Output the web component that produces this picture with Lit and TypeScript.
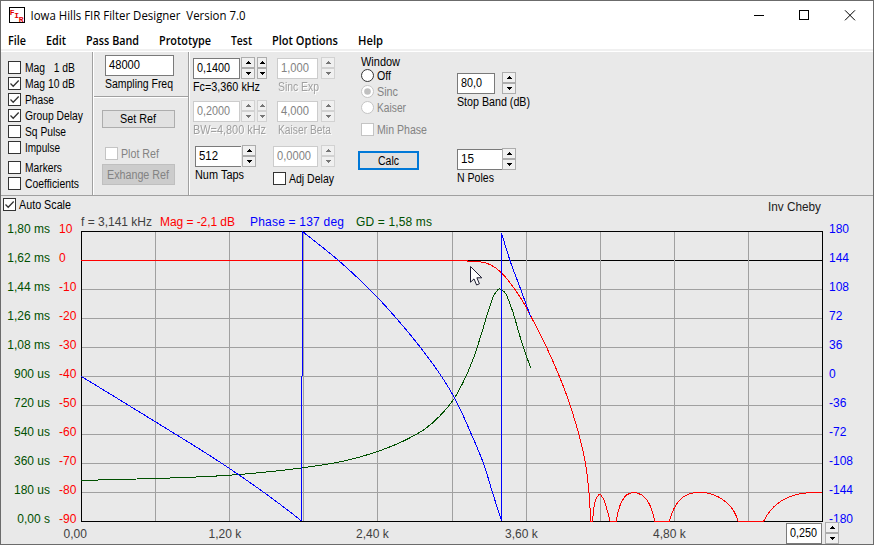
import { LitElement, html, svg, css } from "lit";
import { customElement, property } from "lit/decorators.js";

type Pt = [number, number];

// Text set to a known advance width, baseline 11px below the top edge.
const label = (text: string, width: number, cls = "") => html`
  <svg class="label ${cls}" width=${width + 1} height="14">
    <text x="0" y="11" textLength=${width} lengthAdjust="spacingAndGlyphs">${text.replace(/ /g, "\u00a0")}</text>
  </svg>`;

const labelCss = css`
  .label { display: block; flex: none; overflow: visible; font: 12.5px "Liberation Sans", Arial, sans-serif; fill: #000; }
  .dim { fill: #838383; }
  .etched { fill: #a0a0a0; filter: drop-shadow(1px 1px 0 #fff); }
`;

@customElement("check-box")
class CheckBox extends LitElement {
  @property() text = "";
  @property({ type: Number }) w = 0;
  @property({ type: Boolean }) checked = false;
  @property({ type: Boolean }) off = false;
  @property({ type: Boolean }) round = false;
  static styles = [labelCss, css`
    :host { display: flex; height: 16px; gap: 4px; }
    :host([tight]) { gap: 3px; }
    .box { display: block; flex: none; }
  `];
  render() {
    const line = this.off ? "#c4c4c4" : "#333";
    const shape = this.round
      ? svg`<circle cx="6.5" cy="6.5" r="6" fill="#fff" stroke=${line}/>${this.checked ? svg`<circle cx="6.5" cy="6.5" r="3.3" fill="#c0c0c0"/>` : ""}`
      : svg`<rect x=".5" y=".5" width="12" height="12" fill="#fff" stroke=${line}/>${this.checked ? svg`<path d="M2.5 6.5L5.2 9.2L10.7 3.5" fill="none" stroke="#333" stroke-width="1.3"/>` : ""}`;
    return html`<svg class="box" width="13" height="13">${shape}</svg>${label(this.text, this.w, this.off ? "dim" : "")}`;
  }
}

@customElement("spin-buttons")
class SpinButtons extends LitElement {
  @property({ type: Number }) w = 14;
  @property({ type: Boolean }) off = false;
  static styles = css`:host { display: block; flex: none; height: 22px; } svg { display: block; }`;
  render() {
    const w = this.w;
    const line = this.off ? "#d2d2d2" : "#adadad";
    const ink = this.off ? "#777" : "#000";
    const c = w / 2;
    return html`<svg width=${w} height="22" shape-rendering="crispEdges">
      <rect x=".5" y=".5" width=${w - 1} height="10" fill="#f0f0f0" stroke=${line}/>
      <rect x=".5" y="11.5" width=${w - 1} height="10" fill="#f0f0f0" stroke=${line}/>
      <path d="M${c - 2.5} 7h5v-1h-1v-1h-1v-1h-1v1h-1v1h-1z" fill=${ink}/>
      <path d="M${c - 2.5} 15h5v1h-1v1h-1v1h-1v-1h-1v-1h-1z" fill=${ink}/>
    </svg>`;
  }
}

@customElement("edit-field")
class EditField extends LitElement {
  @property() text = "";
  @property({ type: Number }) w = 0;
  @property({ type: Boolean }) off = false;
  static styles = [labelCss, css`
    :host { display: block; flex: none; box-sizing: border-box; height: 21px; background: #fff; border: 1px solid #7a7a7a; padding: 2px 0 0 3px; }
    :host([off]) { border-color: #ccc; }
    :host([open]) { border-right: 0; }
  `];
  render() { return label(this.text, this.w, this.off ? "dim" : ""); }
}

// Chord-length parametrised spline through the sample points.
function curve(p: Pt[]): string {
  const dist = (a: Pt, b: Pt) => Math.hypot(b[0] - a[0], b[1] - a[1]);
  const last = p.length - 1;
  const slope = p.map((b, i): Pt => {
    if (i === 0 || i === last) {
      const [a, c] = i === 0 ? [p[0], p[1]] : [p[last - 1], p[last]];
      const d = dist(a, c);
      return [(c[0] - a[0]) / d, (c[1] - a[1]) / d];
    }
    const a = p[i - 1], c = p[i + 1], d1 = dist(a, b), d2 = dist(b, c);
    const mix = (k: 0 | 1) => (((b[k] - a[k]) / d1) * d2 + ((c[k] - b[k]) / d2) * d1) / (d1 + d2);
    return [mix(0), mix(1)];
  });
  let d = `M${p[0][0]} ${p[0][1]}`;
  for (let i = 0; i < last; i++) {
    const b = p[i], c = p[i + 1], t = dist(b, c) / 3;
    d += `C${b[0] + slope[i][0] * t} ${b[1] + slope[i][1] * t} ${c[0] - slope[i + 1][0] * t} ${c[1] - slope[i + 1][1] * t} ${c[0]} ${c[1]}`;
  }
  return d;
}

const PHASE: Pt[][] = [
  [[81.5, 376.5], [155.3, 421.7], [229.5, 468.5], [289.5, 511.5], [301.5, 521]],
  [[302.5, 231.5], [338.5, 260.5], [377.5, 297.5], [396.5, 318.5], [420.5, 347.5], [437.5, 370.5], [453.5, 396], [471.5, 434.5], [483.5, 463.5], [492.5, 492.5], [501.2, 520]],
  [[501.5, 233], [510, 260.5], [520, 287.5], [530.7, 317]],
];
const DELAY: Pt[] = [
  [81.5, 480.4], [155.3, 478.5], [229.5, 475.2], [290, 469.4], [302, 467.9], [351, 459.4], [377.5, 451.5], [403.5, 441], [424.5, 429.3], [440, 415.8], [453.5, 399.5], [463, 382.5], [473.5, 358], [481.7, 333], [490, 306], [495, 293.5], [499.5, 288.8], [504.3, 292], [510, 304], [520, 336.5], [526, 355], [530.7, 367.5],
];
const MAG: Pt[][] = [
  [[467, 261.5], [478, 261.6], [486.7, 263.3], [493.5, 266.5], [501.5, 272.8], [511.7, 285], [523.5, 302.5], [530.7, 316], [545, 344], [556.7, 370], [568.5, 400.5], [575.3, 421.8], [580, 438.5], [585.5, 463.5], [588.5, 487], [590.8, 521]],
  [[592.7, 521], [594, 506.7], [596.5, 497.7], [599.7, 494.3], [602.7, 497.7], [606.7, 508.5], [610, 521]],
  [[616.3, 521], [617.7, 513.3], [621.7, 501.7], [626.7, 494.9], [633.7, 492.5], [641.7, 495], [648.5, 502.5], [652.7, 512.7], [654.7, 521]],
  [[669.3, 521], [670.7, 516.7], [675, 506.7], [683.3, 496.9], [691.7, 493.2], [700, 492.5], [708.3, 493.2], [718.3, 496.9], [728.3, 504.2], [735.7, 514.7], [738, 521]],
  [[763.7, 521], [768.3, 513.3], [776.7, 504.3], [788.3, 497.3], [801.7, 493.5], [815, 492.5], [822, 492.5]],
];
const MAG_FLOOR: Pt[] = [[590, 593], [610, 617], [654, 670], [738, 764]];
const GRID_X = [155, 229, 303, 377, 452, 526, 600, 674, 748];
const DELAY_TICKS = ["1,80 ms", "1,62 ms", "1,44 ms", "1,26 ms", "1,08 ms", "900 us", "720 us", "540 us", "360 us", "180 us", "0,00 s"];
const MENU: [string, number, number][] = [["File", 8, 18], ["Edit", 46, 20], ["Pass Band", 86, 53], ["Prototype", 159, 52], ["Test", 231, 21], ["Plot Options", 272, 66], ["Help", 358, 25]];
const X_TICKS: [string, number][] = [["0,00", 63.5], ["1,20 k", 208.5], ["2,40 k", 356], ["3,60 k", 505], ["4,80 k", 653]];

@customElement("response-plot")
class ResponsePlot extends LitElement {
  static styles = css`
    :host { display: block; height: 308px; }
    svg { display: block; overflow: visible; font: 12px "Liberation Sans", Arial, sans-serif; }
    .crisp { shape-rendering: crispEdges; fill: none; stroke-width: 1; }
    .grid { stroke: #a0a0a0; }
    .black { stroke: #000; }
    .phase { stroke: #00f; }
    .delay { stroke: #005000; }
    .mag { stroke: #f00; }
    .t-delay { fill: #005000; }
    .t-mag { fill: #f00; }
    .t-phase { fill: #00f; }
    .t-freq { fill: #404040; }
  `;
  render() {
    const rows = DELAY_TICKS.map((_, i) => 231 + i * 29);
    return html`<svg width="872" height="308" viewBox="1 214 872 308">
      <text class="t-freq" x="81" y="226" textLength="71">f = 3,141 kHz</text>
      <text class="t-mag" x="160" y="226" textLength="75">Mag = -2,1 dB</text>
      <text class="t-phase" x="250" y="226" textLength="94">Phase = 137 deg</text>
      <text class="t-delay" x="356" y="226" textLength="76">GD = 1,58 ms</text>
      ${rows.map((y, i) => svg`
        <text class="t-delay" x="50" y=${y + 2} text-anchor="end">${DELAY_TICKS[i]}</text>
        <text class="t-mag" x="59" y=${y + 2}>${10 - i * 10}</text>
        <text class="t-phase" x="829" y=${y + 2}>${180 - i * 36}</text>`)}
      <g class="crisp">
        ${rows.slice(1, 10).map((y, i) => svg`<path class=${i === 0 ? "black" : "grid"} d="M81 ${y + 0.5}H822"/>`)}
        ${GRID_X.map((x) => svg`<path class="grid" d="M${x + 0.5} 231V521"/>`)}
        <rect class="black" x="81.5" y="231.5" width="741" height="290"/>
        <path class="delay" d=${curve(DELAY)}/>
        <path class="mag" d="M81 260.5H468"/>
        ${MAG.map((p) => svg`<path class="mag" d=${curve(p)}/>`)}
        ${MAG_FLOOR.map(([a, b]) => svg`<path class="mag" d="M${a} 521.5H${b}"/>`)}
        ${PHASE.map((p) => svg`<path class="phase" d=${curve(p)}/>`)}
        <path class="phase" d="M302.5 231V376M301.5 376V521M501.5 233V521"/>
      </g>
      <path d="M470.5 266.5V282.2L474 278.9L476.6 285L479.4 283.8L476.9 277.8H481.8Z" fill="#fff" stroke="#1c1c30" stroke-width="1"/>
    </svg>`;
  }
}

@customElement("app-root")
class AppRoot extends LitElement {
  static styles = [labelCss, css`
    :host { display: block; }
    .window { box-sizing: border-box; width: 874px; height: 545px; border: 1px solid #6b6b6b; background: #e9e9e9; overflow: hidden; }
    .chrome { display: block; background: #fff; font: 12px "Open Sans", "Noto Sans", sans-serif; fill: #000; }
    .menu { font-weight: 600; }
    .mark { font: bold 8px "Liberation Mono", monospace; fill: #e00000; }
    .bar { display: flex; box-sizing: border-box; height: 145px; border-top: 1px solid #fff; border-bottom: 1px solid #a0a0a0; }
    .col { display: flex; flex-direction: column; align-items: flex-start; box-sizing: border-box; flex: none; }
    .traces { width: 92px; padding: 9px 0 0 7px; border-right: 1px solid #a0a0a0; }
    .traces .later { margin-top: 4px; }
    .ref { width: 96px; border-left: 1px solid #fff; border-right: 1px solid #a0a0a0; }
    .sample { box-sizing: border-box; width: 94px; height: 45px; padding: 3px 0 0 11px; border-bottom: 1px solid #a0a0a0; }
    .sample .label { margin-top: 1px; }
    .refs { box-sizing: border-box; width: 94px; padding: 12px 0 0 8px; border-top: 1px solid #fff; }
    .btn { display: flex; align-items: center; justify-content: center; box-sizing: border-box; background: #e1e1e1; border: 1px solid #adadad; }
    .set { width: 73px; height: 18px; }
    .plotref { margin: 19px 0 1px 3px; }
    .swap { width: 73px; height: 21px; background: #ccc; border-color: #bfbfbf; }
    .calc { width: 61px; height: 19px; border: 2px solid #0078d7; margin-top: 12px; }
    .row { display: flex; height: 22px; }
    .row edit-field { margin-top: 1px; }
    .col > .label { margin-top: 1px; }
    .edge { border-left: 1px solid #fff; }
    .freqs { width: 84px; padding: 5px 0 0 3px; }
    .second { margin-top: 6px; }
    .third { margin-top: 8px; }
    .w36 { width: 36px; } .w38 { width: 38px; } .w41 { width: 41px; } .w45 { width: 45px; } .w46 { width: 46px; } .w47 { width: 47px; } .w69 { width: 69px; }
    .g1 { margin-left: 1px; } .g2 { margin-left: 2px; } .g3 { margin-left: 3px; } .g7 { margin-left: 7px; }
    .shift { margin-left: 2px; }
    .params { width: 85px; padding-top: 5px; }
    .params .inset { margin-left: 4px; }
    .params .label { margin-left: 5px; }
    .adj { margin-top: 5px; }
    .kind { width: 99px; padding-top: 2px; }
    .kind .opt { margin-left: 3px; }
    .kind .head { margin-left: 3px; }
    .min { margin-top: 6px; }
    .stop { padding-top: 20px; }
    .stop .poles { margin-top: 39px; }
    .top { display: flex; justify-content: space-between; height: 16px; padding: 2px 51px 0 2px; }
    .top .name { margin-top: 2px; fill: #202020; }
    .foot { display: flex; height: 22px; }
    .xaxis { display: block; flex: none; font: 12px "Liberation Sans", Arial, sans-serif; fill: #404040; }
    .scale { margin-top: 1px; }
  `];
  render() {
    return html`<div class="window">
      <svg class="chrome" width="872" height="50" viewBox="1 1 872 50">
        <rect x="9.5" y="7.5" width="15" height="15" fill="#fff" stroke="#000"/>
        <text class="mark" x="9.8" y="15">F</text><text class="mark" x="14.2" y="18">I</text><text class="mark" x="18.8" y="21.5">R</text>
        <text x="30.5" y="20" textLength="215" lengthAdjust="spacingAndGlyphs">Iowa Hills FIR Filter Designer${"\u00a0\u00a0"}Version 7.0</text>
        <g fill="none" stroke="#000"><path d="M754 15.5H764"/><rect x="799.5" y="10.5" width="9" height="9"/><path d="M845 10.3L855 20.3M855 10.3L845 20.3"/></g>
        ${MENU.map(([t, x, w]) => svg`<text class="menu" x=${x} y="45" textLength=${w} lengthAdjust="spacingAndGlyphs">${t}</text>`)}
        <rect x="1" y="49" width="872" height="2" fill="#f0f0f0"/>
      </svg>
      <div class="bar">
        <div class="col traces">
          <check-box text="Mag   1 dB" .w=${50}></check-box>
          <check-box text="Mag 10 dB" .w=${50} checked></check-box>
          <check-box text="Phase" .w=${29} checked></check-box>
          <check-box text="Group Delay" .w=${58} checked></check-box>
          <check-box text="Sq Pulse" .w=${41}></check-box>
          <check-box text="Impulse" .w=${35}></check-box>
          <check-box class="later" text="Markers" .w=${37}></check-box>
          <check-box text="Coefficients" .w=${54}></check-box>
        </div>
        <div class="col ref">
          <div class="sample"><edit-field class="w69" text="48000" .w=${31}></edit-field>${label("Sampling Freq", 68)}</div>
          <div class="refs">
            <div class="btn set">${label("Set Ref", 36)}</div>
            <check-box class="plotref" tight off text="Plot Ref" .w=${38}></check-box>
            <div class="btn swap">${label("Exhange Ref", 62, "dim")}</div>
          </div>
        </div>
        <div class="col freqs edge">
          <div class="row"><edit-field class="w47" text="0,1400" .w=${33}></edit-field><spin-buttons class="g1"></spin-buttons><spin-buttons class="g2" .w=${10}></spin-buttons></div>
          ${label("Fc=3,360 kHz", 67)}
          <div class="row second"><edit-field class="w47" off text="0,2000" .w=${33}></edit-field><spin-buttons off class="g1"></spin-buttons><spin-buttons off class="g2" .w=${10}></spin-buttons></div>
          ${label("BW=4,800 kHz", 73, "etched")}
          <div class="row third shift"><edit-field class="w46" open text="512" .w=${19}></edit-field><spin-buttons class="g1"></spin-buttons></div>
          ${label("Num Taps", 49, "shift")}
        </div>
        <div class="col params">
          <div class="row inset"><edit-field class="w41" off text="1,000" .w=${28}></edit-field><spin-buttons off class="g3"></spin-buttons></div>
          ${label("Sinc Exp", 41, "etched")}
          <div class="row second inset"><edit-field class="w41" off text="4,000" .w=${28}></edit-field><spin-buttons off class="g3"></spin-buttons></div>
          ${label("Kaiser Beta", 53, "etched")}
          <div class="row third"><edit-field class="w45" off text="0,0000" .w=${34}></edit-field><spin-buttons off class="g3"></spin-buttons></div>
          <check-box class="adj" tight text="Adj Delay" .w=${45}></check-box>
        </div>
        <div class="col kind">
          ${label("Window", 39, "head")}
          <check-box class="opt" tight round text="Off" .w=${14}></check-box>
          <check-box class="opt" tight round off checked text="Sinc" .w=${21}></check-box>
          <check-box class="opt" tight round off text="Kaiser" .w=${29}></check-box>
          <check-box class="opt min" tight off text="Min Phase" .w=${50}></check-box>
          <div class="btn calc">${label("Calc", 21)}</div>
        </div>
        <div class="col stop">
          <div class="row"><edit-field class="w38" text="80,0" .w=${21}></edit-field><spin-buttons class="g7"></spin-buttons></div>
          ${label("Stop Band (dB)", 73)}
          <div class="row poles"><edit-field class="w45" open text="15" .w=${13}></edit-field><spin-buttons></spin-buttons></div>
          ${label("N Poles", 37)}
        </div>
      </div>
      <div class="top"><check-box tight checked text="Auto Scale" .w=${52}></check-box>${label("Inv Cheby", 53, "name")}</div>
      <response-plot></response-plot>
      <div class="foot">
        <svg class="xaxis" width="785" height="22" viewBox="1 522 785 22">${X_TICKS.map(([t, x]) => svg`<text x=${x} y="538">${t}</text>`)}</svg>
        <edit-field class="scale w36" text="0,250" .w=${27}></edit-field>
        <spin-buttons class="g3"></spin-buttons>
      </div>
    </div>`;
  }
}
